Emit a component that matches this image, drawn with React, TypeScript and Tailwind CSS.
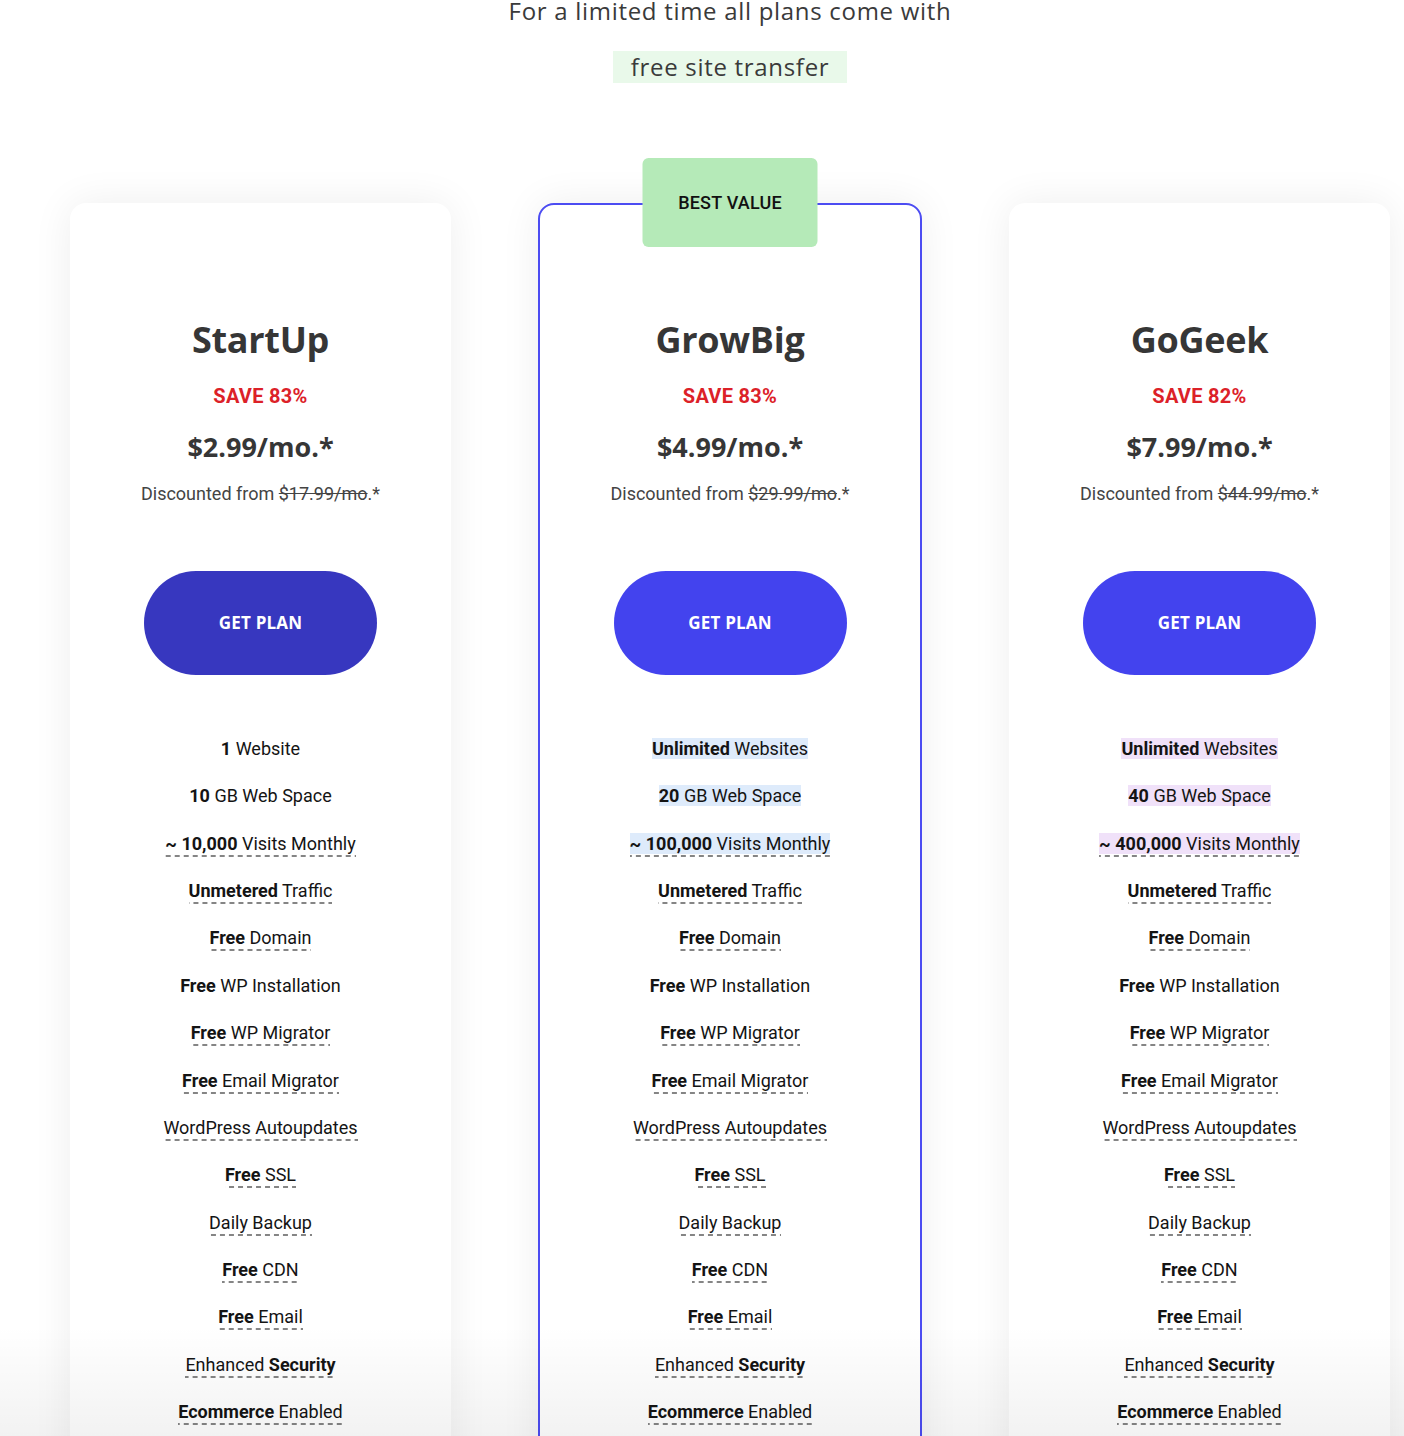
import React from "react";

type Feat = { parts: { t: string; b?: boolean }[]; dash: boolean; hl?: boolean };

const common: Feat[] = [
  { parts: [{ t: "Unmetered", b: true }, { t: " Traffic" }], dash: true },
  { parts: [{ t: "Free", b: true }, { t: " Domain" }], dash: true },
  { parts: [{ t: "Free", b: true }, { t: " WP Installation" }], dash: false },
  { parts: [{ t: "Free", b: true }, { t: " WP Migrator" }], dash: true },
  { parts: [{ t: "Free", b: true }, { t: " Email Migrator" }], dash: true },
  { parts: [{ t: "WordPress Autoupdates" }], dash: true },
  { parts: [{ t: "Free", b: true }, { t: " SSL" }], dash: true },
  { parts: [{ t: "Daily Backup" }], dash: true },
  { parts: [{ t: "Free", b: true }, { t: " CDN" }], dash: true },
  { parts: [{ t: "Free", b: true }, { t: " Email" }], dash: true },
  { parts: [{ t: "Enhanced " }, { t: "Security", b: true }], dash: true },
  { parts: [{ t: "Ecommerce", b: true }, { t: " Enabled" }], dash: true },
];

type Plan = {
  name: string;
  save: string;
  price: string;
  old: string;
  btn: string;
  hlColor: string;
  featured?: boolean;
  top: Feat[];
};

const plans: Plan[] = [
  {
    name: "StartUp",
    save: "SAVE 83%",
    price: "$2.99/mo.*",
    old: "$17.99/mo",
    btn: "bg-[#3737bf]",
    hlColor: "",
    top: [
      { parts: [{ t: "1", b: true }, { t: " Website" }], dash: false },
      { parts: [{ t: "10", b: true }, { t: " GB Web Space" }], dash: false },
      { parts: [{ t: "~ 10,000", b: true }, { t: " Visits Monthly" }], dash: true },
    ],
  },
  {
    name: "GrowBig",
    save: "SAVE 83%",
    price: "$4.99/mo.*",
    old: "$29.99/mo",
    btn: "bg-[#4343ee]",
    hlColor: "bg-[#deebfb]",
    featured: true,
    top: [
      { parts: [{ t: "Unlimited", b: true }, { t: " Websites" }], dash: false, hl: true },
      { parts: [{ t: "20", b: true }, { t: " GB Web Space" }], dash: false, hl: true },
      { parts: [{ t: "~ 100,000", b: true }, { t: " Visits Monthly" }], dash: true, hl: true },
    ],
  },
  {
    name: "GoGeek",
    save: "SAVE 82%",
    price: "$7.99/mo.*",
    old: "$44.99/mo",
    btn: "bg-[#4343ee]",
    hlColor: "bg-[#f0e1f9]",
    top: [
      { parts: [{ t: "Unlimited", b: true }, { t: " Websites" }], dash: false, hl: true },
      { parts: [{ t: "40", b: true }, { t: " GB Web Space" }], dash: false, hl: true },
      { parts: [{ t: "~ 400,000", b: true }, { t: " Visits Monthly" }], dash: true, hl: true },
    ],
  },
];

const heading = "font-['Open_Sans',sans-serif]";
const body = "font-['Roboto','Liberation_Sans',sans-serif]";

function Feature({ f, hlColor }: { f: Feat; hlColor: string }) {
  const inner = (
    <span className={f.hl ? hlColor : ""}>
      {f.parts.map((p, i) =>
        p.b ? (
          <b key={i} className="font-bold">
            {p.t}
          </b>
        ) : (
          <span key={i}>{p.t}</span>
        )
      )}
    </span>
  );
  return (
    <div className="h-[24px] leading-[24px] text-[18px] text-[#141414] whitespace-pre">
      {f.dash ? (
        <span className="pb-[3px] bg-[linear-gradient(to_right,#858585_60%,transparent_60%)] bg-[length:9px_2px] bg-repeat-x bg-bottom">
          {inner}
        </span>
      ) : (
        inner
      )}
    </div>
  );
}

function Card({ p }: { p: Plan }) {
  return (
    <div
      className={
        "relative bg-white rounded-t-[16px] h-[1300px] flex flex-col items-center shadow-[0_0_40px_rgba(0,0,0,0.07)] " +
        (p.featured ? "border-2 border-[#4c4cf2] pt-[113px] " : "pt-[115px] ")
      }
    >
      {p.featured && (
        <div
          className={
            "absolute left-1/2 -translate-x-1/2 top-[-47px] w-[175px] h-[89px] rounded-[6px] bg-[#b5eab8] flex items-center justify-center text-[18px] font-medium text-[#111] tracking-[0.2px] " +
            body
          }
        >
          BEST VALUE
        </div>
      )}
      <div className={"text-[36px] leading-[44px] font-bold text-[#363636] tracking-[-0.3px] " + heading}>{p.name}</div>
      <div className={"mt-[22px] text-[20px] leading-[24px] font-bold tracking-[0.3px] text-[#dc2128] " + body}>{p.save}</div>
      <div className={"mt-[21px] text-[27px] leading-[36px] font-bold text-[#363636] " + heading}>{p.price}</div>
      <div className={"mt-[17px] text-[18px] leading-[24px] text-[#444] " + body}>
        Discounted from <span className="line-through">{p.old}</span>.*
      </div>
      <button
        className={
          "mt-[65px] w-[233px] h-[104px] rounded-full text-white text-[17px] font-bold tracking-[0.2px] " + p.btn + " " + heading
        }
      >
        GET PLAN
      </button>
      <div className={"mt-[62px] flex flex-col items-center gap-[23.36px] " + body}>
        {[...p.top, ...common].map((f, i) => (
          <Feature key={i} f={f} hlColor={p.hlColor} />
        ))}
      </div>
    </div>
  );
}

export default function App() {
  return (
    <div className="relative h-[1436px] overflow-hidden bg-white">
      <div className="pl-[70px] w-[1404px]">
        <div className="w-[1320px] flex flex-col items-center">
          <div className={"mt-[-7px] text-[24px] leading-[36px] tracking-[0.7px] text-[#3a3a3a] " + heading}>
            For a limited time all plans come with
          </div>
          <div className={"mt-[22px] h-[32px] px-[18px] bg-[#e9f9ea] text-[24px] leading-[32px] tracking-[0.7px] text-[#3a3a3a] " + heading}>
            free site transfer
          </div>
        </div>
        <div className="mt-[120px] grid grid-cols-[381px_384px_381px] gap-x-[87px] w-[1320px]">
          {plans.map((p) => (
            <Card key={p.name} p={p} />
          ))}
        </div>
      </div>
      <div className="pointer-events-none absolute left-0 right-0 bottom-0 h-[110px] bg-[linear-gradient(to_bottom,rgba(0,0,0,0),rgba(0,0,0,0.05))]" />
    </div>
  );
}
